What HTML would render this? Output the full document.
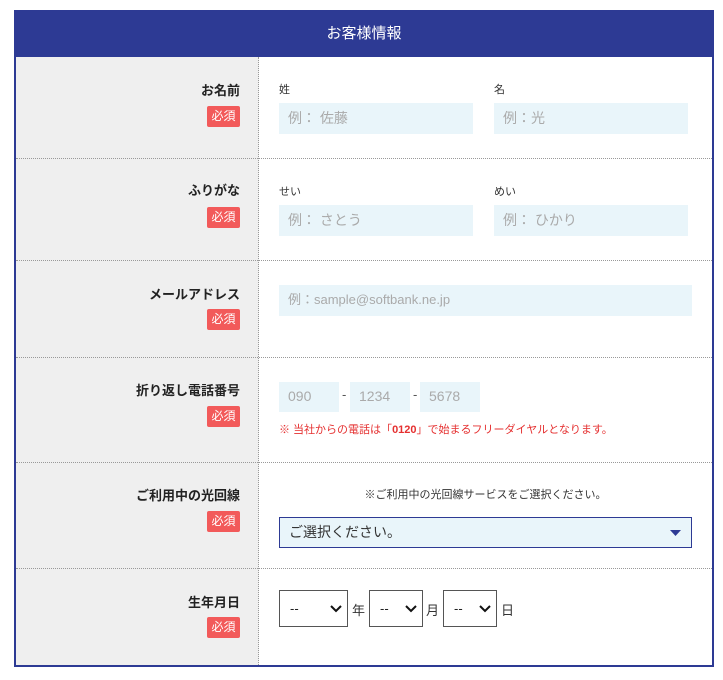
<!DOCTYPE html>
<html><head><meta charset="utf-8"><style>
*{margin:0;padding:0;box-sizing:border-box}
body{width:723px;height:680px;background:#fff;font-family:"Liberation Sans","Noto Sans CJK JP",sans-serif;position:relative;overflow:hidden;color:#333}
.a{position:absolute}
.hd{left:14px;top:10px;width:700px;height:47px;background:#2d3a94;color:#fff;font-size:15px;text-align:center;line-height:47px}
.box{left:14px;top:57px;width:700px;height:610px;border:2px solid #2d3a94;border-top:none}
.lc{left:16px;top:57px;width:243px;height:608px;background:#efefef;border-right:1px dotted #999}
.sep{left:16px;width:696px;height:0;border-top:1px dotted #999}
.lb{right:483px;font-size:13px;font-weight:bold;color:#222;text-align:right;white-space:nowrap}
.bd{left:207px;width:33px;height:21px;background:#f25a5a;color:#fff;font-size:12px;line-height:21px;text-align:center;border-radius:2px}
.sl{font-size:11px;color:#333}
.in{background:#e9f5fa;color:#aaa;font-size:14px;padding-left:9px;line-height:30px;height:31px}
.sel{border:1px solid #555;height:37px;background:#fff;font-size:13px;color:#222}
.sel span{position:absolute;left:10px;top:10px}
.sel svg{position:absolute;top:14px}
</style></head><body>
<div class="a hd">お客様情報</div>
<div class="a box"></div>
<div class="a lc"></div>
<div class="a sep" style="top:158px"></div>
<div class="a sep" style="top:260px"></div>
<div class="a sep" style="top:357px"></div>
<div class="a sep" style="top:462px"></div>
<div class="a sep" style="top:568px"></div>

<div class="a lb" style="top:80px">お名前</div>
<div class="a bd" style="top:106px">必須</div>
<div class="a sl" style="left:279px;top:81px">姓</div>
<div class="a sl" style="left:494px;top:81px">名</div>
<div class="a in" style="left:279px;top:103px;width:194px">例： 佐藤</div>
<div class="a in" style="left:494px;top:103px;width:194px">例：光</div>

<div class="a lb" style="top:180px">ふりがな</div>
<div class="a bd" style="top:207px">必須</div>
<div class="a sl" style="left:279px;top:183px">せい</div>
<div class="a sl" style="left:494px;top:183px">めい</div>
<div class="a in" style="left:279px;top:205px;width:194px">例： さとう</div>
<div class="a in" style="left:494px;top:205px;width:194px">例： ひかり</div>

<div class="a lb" style="top:284px">メールアドレス</div>
<div class="a bd" style="top:309px">必須</div>
<div class="a in" style="left:279px;top:285px;width:413px;font-size:13px">例：sample@softbank.ne.jp</div>

<div class="a lb" style="top:380px">折り返し電話番号</div>
<div class="a bd" style="top:406px">必須</div>
<div class="a in" style="left:279px;top:382px;width:60px;height:30px;line-height:29px">090</div>
<div class="a" style="left:342px;top:387px;font-size:13px;color:#555">-</div>
<div class="a in" style="left:350px;top:382px;width:60px;height:30px;line-height:29px">1234</div>
<div class="a" style="left:413px;top:387px;font-size:13px;color:#555">-</div>
<div class="a in" style="left:420px;top:382px;width:60px;height:30px;line-height:29px">5678</div>
<div class="a" style="left:279px;top:421px;font-size:11px;color:#e53030;white-space:nowrap">※ 当社からの電話は「<b>0120</b>」で始まるフリーダイヤルとなります。</div>

<div class="a lb" style="top:485px">ご利用中の光回線</div>
<div class="a bd" style="top:511px">必須</div>
<div class="a" style="left:279px;width:413px;top:486px;font-size:11px;color:#333;text-align:center">※ご利用中の光回線サービスをご選択ください。</div>
<div class="a" style="left:279px;top:517px;width:413px;height:31px;background:#e9f5fa;border:1px solid #2d3a94;font-size:14px;color:#333;line-height:28px;padding-left:9px">ご選択ください。
<svg class="a" style="left:390px;top:12px" width="11" height="6"><path d="M0 0H11L5.5 6Z" fill="#2d3a94"/></svg></div>

<div class="a lb" style="top:592px">生年月日</div>
<div class="a bd" style="top:617px">必須</div>
<div class="a sel" style="left:279px;top:590px;width:69px"><span>--</span><svg style="left:50px" width="12" height="8"><path d="M1 1L6 6L11 1" stroke="#111" stroke-width="2" fill="none"/></svg></div>
<div class="a" style="left:352px;top:600px;font-size:13px">年</div>
<div class="a sel" style="left:369px;top:590px;width:54px"><span>--</span><svg style="left:35px" width="12" height="8"><path d="M1 1L6 6L11 1" stroke="#111" stroke-width="2" fill="none"/></svg></div>
<div class="a" style="left:426px;top:600px;font-size:13px">月</div>
<div class="a sel" style="left:443px;top:590px;width:54px"><span>--</span><svg style="left:35px" width="12" height="8"><path d="M1 1L6 6L11 1" stroke="#111" stroke-width="2" fill="none"/></svg></div>
<div class="a" style="left:501px;top:600px;font-size:13px">日</div>
</body></html>
